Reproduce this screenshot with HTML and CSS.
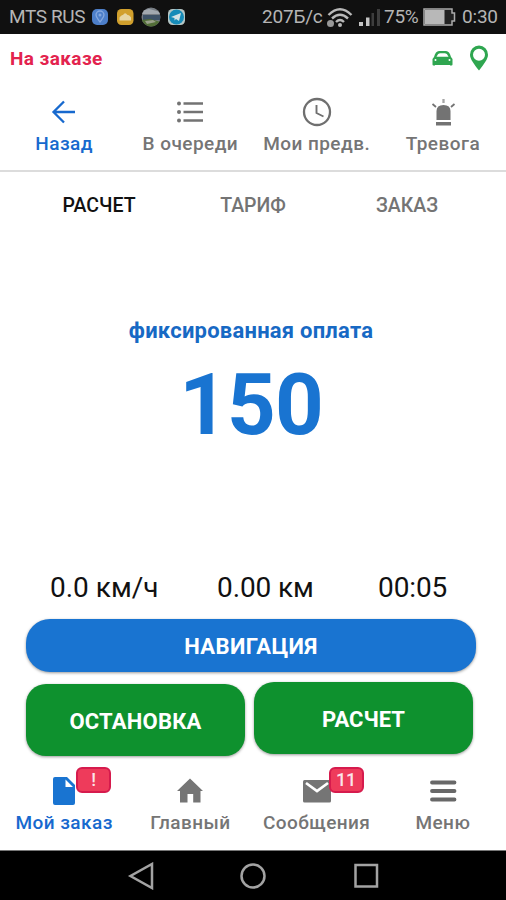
FILE: index.html
```html
<!DOCTYPE html>
<html lang="ru">
<head>
<meta charset="utf-8">
<title>Мой заказ</title>
<link rel="stylesheet" href="styles.css">
</head>
<body>
<div class="status">
  <span class="carrier">MTS RUS</span>
  <svg class="apps" width="94" height="20" viewBox="0 0 94 20">
    <rect x="1" y="2" width="16" height="16" rx="5" fill="#4d7fc9"/>
    <path d="M9 15C7 12 5 10 5 8a4 4 0 0 1 8 0c0 2-2 4-4 7z" fill="none" stroke="#86a9df" stroke-width="1.3"/><circle cx="9" cy="8" r="1.5" fill="#86a9df"/>
    <rect x="26" y="2" width="16.500" height="16" rx="4.500" fill="#d1a02d"/>
    <path d="M28.500 13.500V10.500q2-3 3.500-2.500 2-3.500 4.500 0 2-.5 3.500 2.500v3z" fill="#e7d6a3"/>
    <clipPath id="photo"><circle cx="60" cy="10" r="9.500"/></clipPath>
    <g clip-path="url(#photo)"><path fill="#777d84" d="M50 0h20v20H50z"/><path fill="#a2a9b0" d="M50 4l8-2 12 3v2H50z"/><path fill="#3e5368" d="M52 8h17v5H52z"/><path fill="#526d37" d="M50 13l9-1 11 3v5H50z"/><path fill="#9aa08b" d="M54 14l8-1 3 2-9 2z"/></g>
    <rect x="77" y="2" width="17" height="16" rx="4.500" fill="#b4c5c4"/><circle cx="85.500" cy="10" r="7.500" fill="#168bb8"/><path d="M80 10l10-4-2 8-3-2-1.500 1.500V11z" fill="#d5e3e5"/>
  </svg>
  <span class="net">207Б/с</span>
  <svg class="wifi" width="26" height="21" viewBox="0 0 26 21"><g fill="none" stroke="#b8b8b8" stroke-width="2.400"><path d="M1.500 8Q13-3.500 24.500 8M5 11.500Q13 4 21 11.500M9 15Q13 11 17 15"/></g><circle cx="13" cy="18" r="2" fill="#b8b8b8"/><circle cx="3.500" cy="16.500" r="3.500" fill="#999"/></svg>
  <svg class="signal" width="22" height="19" viewBox="0 0 22 19"><path fill="#c4c4c4" d="M0 13h4v4H0zM7 8.500h3.500V17H7z"/><path fill="#3d3d3d" d="M12.500 4H15v13h-2.500zM18 0h3v17h-3z"/></svg>
  <span class="percent">75%</span>
  <svg class="battery" width="33" height="18" viewBox="0 0 33 18"><path d="M1 1h28v4h2.500v8H29v4H1z" fill="#222" stroke="#aaa" stroke-width="1.500"/><path fill="#b8b8b8" d="M2 2h19.500v14H2z"/></svg>
  <span class="time">0:30</span>
</div>
<header class="head">
  <div class="state"><span class="state-text">На заказе</span>
    <svg class="car" width="21" height="16" viewBox="0 0 21 16"><path fill="#2fa650" fill-rule="evenodd" d="M2 7Q3.500 1 7 1h7q3.500 0 5 6l1.500 2v5.500q0 1-1 1h-1.500V15h-15v.5H1.500q-1 0-1-1V9zM4.500 6.700h12Q15 3.300 13 3.300H8Q6 3.300 4.500 6.700zM3.500 9a1 1 0 1 0 0 2 1 1 0 0 0 0-2zm14 0a1 1 0 1 0 0 2 1 1 0 0 0 0-2z"/></svg>
    <svg class="pin" width="20" height="26" viewBox="0 0 20 26"><path fill="#2fa650" fill-rule="evenodd" d="M10 .5a9 9 0 0 0-9 9.200C1 14 5 19 10 25.500 15 19 19 14 19 9.700A9 9 0 0 0 10 .5zm0 3.200a6 6 0 1 1 0 12 6 6 0 0 1 0-12z"/></svg>
  </div>
  <nav class="tools">
    <div class="item on"><svg width="30" height="30" viewBox="0 0 30 30"><path d="M26 15H5.500M15 4.500L4.500 15 15 25.500" fill="none" stroke="#1769ce" stroke-width="2.300"/></svg><span class="label">Назад</span></div>
    <div class="item"><svg width="30" height="30" viewBox="0 0 30 30"><g fill="#737373"><circle cx="4" cy="6.500" r="2"/><circle cx="4" cy="15" r="2"/><circle cx="4" cy="23.500" r="2"/><path d="M8.500 5.300H28v2.400H8.500zM8.500 13.800H28v2.400H8.500zM8.500 22.300H28v2.400H8.500z"/></g></svg><span class="label">В очереди</span></div>
    <div class="item"><svg width="30" height="30" viewBox="0 0 30 30"><g fill="none" stroke="#6f6f6f"><circle cx="15" cy="15" r="13" stroke-width="2.300"/><path d="M14.500 8v8l7 3.500" stroke-width="1.900"/></g></svg><span class="label">Мои предв.</span></div>
    <div class="item"><svg width="30" height="30" viewBox="0 0 30 30"><path fill="#737373" d="M8.500 23V14q0-6 7-6t7 6v9zM8 25h15v3.500H8z"/><path d="M4.500 7l3.500 3M26.500 7L23 10" stroke="#737373" stroke-width="1.800"/><path d="M15.500 2v4" stroke="#a6a6a6" stroke-width="2.300"/></svg><span class="label">Тревога</span></div>
  </nav>
</header>
<main class="main">
  <div class="tabs"><span class="tab active"><b>РАСЧЕТ</b></span><span class="tab"><b>ТАРИФ</b></span><span class="tab"><b>ЗАКАЗ</b></span></div>
  <div class="caption">фиксированная оплата</div>
  <div class="sum">150</div>
  <div class="stats"><span class="speed">0.0 км/ч</span><span class="distance">0.00 км</span><span class="elapsed">00:05</span></div>
  <button class="btn navigate">НАВИГАЦИЯ</button>
  <div class="actions"><button class="btn stop">ОСТАНОВКА</button><button class="btn pay">РАСЧЕТ</button></div>
</main>
<nav class="bottom">
  <div class="item on"><div class="icon"><svg width="30" height="30" viewBox="0 0 30 30"><path fill="#1974d1" fill-rule="evenodd" d="M6 1h12l8 8v18q0 2-2 2H6q-2 0-2-2V3q0-2 2-2zm10.500 2.500V11H24z"/></svg><span class="badge">!</span></div><span class="label">Мой заказ</span></div>
  <div class="item"><div class="icon"><svg width="30" height="30" viewBox="0 0 30 30"><path fill="#757575" d="M15 2.500L28 15h-2.500v11.500h-7.300V18h-5.700v8.500H5V15H2z"/></svg></div><span class="label">Главный</span></div>
  <div class="item"><div class="icon"><svg width="30" height="30" viewBox="0 0 30 30"><rect x="1" y="4" width="28" height="22.500" rx="1.500" fill="#757575"/><path d="M4 7l11 8L26 7" fill="none" stroke="#fff" stroke-width="2.700"/></svg><span class="badge">11</span></div><span class="label">Сообщения</span></div>
  <div class="item"><div class="icon"><svg width="30" height="30" viewBox="0 0 30 30"><path d="M4 6.500h22.500M4 15h22.500M4 23.500h22.500" stroke="#686868" stroke-width="3.800" stroke-linecap="round"/></svg></div><span class="label">Меню</span></div>
</nav>
<div class="system">
  <svg width="28" height="28" viewBox="0 0 28 28"><path d="M25 2v24L3.500 14z"/></svg>
  <svg width="28" height="28" viewBox="0 0 28 28"><circle cx="14" cy="14" r="11.500"/></svg>
  <svg width="28" height="28" viewBox="0 0 28 28"><rect x="3.500" y="3" width="21.500" height="21.500"/></svg>
</div>
</body>
</html>
```
FILE: styles.css
```css
* { box-sizing: border-box; }
body { margin: 0; width: 506px; height: 900px; overflow: hidden; display: flex; flex-direction: column; background: #fff; font-family: Roboto, sans-serif; color: #111; }
svg { display: block; flex: none; }
span, b, button { white-space: nowrap; }
.status { height: 34px; flex: none; background: #101010; display: flex; align-items: center; color: #b5b5b5; font-size: 19px; line-height: 34px; }
.carrier { width: 82px; margin-left: 9px; letter-spacing: -0.4px; }
.apps { width: 94px; }
.net { width: 65px; margin-left: 77px; letter-spacing: -0.2px; }
.signal { margin-left: 6px; margin-top: 2px; }
.percent { width: 37px; margin-left: 3px; letter-spacing: -0.3px; }
.battery { margin-left: 2px; }
.time { margin-left: 6px; letter-spacing: -0.2px; }
.head { height: 138px; flex: none; border-bottom: 2px solid #dcdcdc; }
.state { height: 48px; display: flex; align-items: center; padding: 0 17px 0 10px; }
.state-text { font-size: 19px; font-weight: 700; color: #e3234e; flex: 1; letter-spacing: 0.4px; }
.car { margin-right: 16px; }
.tools { display: flex; padding: 15px 0 0 1px; }
.item { flex: 1; display: flex; flex-direction: column; align-items: center; color: #757575; }
.label { font-size: 19px; line-height: 24px; letter-spacing: 0.45px; font-weight: 500; }
.tools .label { margin-top: 5px; }
.on { color: #1769ce; }
.main { height: 586px; flex: none; display: flex; flex-direction: column; }
.tabs { display: flex; height: 67px; padding: 0 22px; align-items: center; }
.tab { flex: 1; text-align: center; color: #747474; font-size: 19.500px; }
.tab b { font-weight: 500; }
.active { color: #111; }
.caption { margin-top: 78px; text-align: center; font-size: 22px; line-height: 28px; font-weight: 700; color: #1769c4; padding-right: 4px; letter-spacing: 0.22px; }
.sum { margin-top: 10px; text-align: center; font-size: 85px; line-height: 100px; font-weight: 700; color: #1974d1; letter-spacing: -1px; padding-right: 4px; }
.stats { margin-top: 116px; height: 34px; display: flex; padding-left: 50px; font-size: 28px; line-height: 34px; }
.speed { width: 167px; }
.distance { width: 161px; }
.distance, .elapsed { letter-spacing: -0.1px; }
.btn { border: 0; padding: 0; color: #fff; font-family: inherit; font-weight: 700; font-size: 22px; box-shadow: 0 1px 3px #0006; }
.navigate { margin: 14px 30px 0 26px; padding-top: 2px; height: 53px; flex: none; border-radius: 24px; background: #1974d1; letter-spacing: 0.4px; }
.actions { display: flex; gap: 9px; padding: 10px 33px 0 26px; align-items: flex-start; }
.actions .btn { width: 219px; height: 72px; padding-top: 2px; flex: none; border-radius: 20px; background: #0e912e; }
.stop { margin-top: 2px; letter-spacing: 0.2px; }
.bottom { height: 92px; flex: none; display: flex; padding: 18px 0 0 1px; }
.icon { position: relative; }
.bottom .label { margin-top: 5px; }
.badge { position: absolute; left: 27px; top: -9px; width: 35px; height: 26px; border: 2px solid #d61b4d; border-radius: 6px; background: #ee3b5b; color: #fbe5e9; font-size: 18px; line-height: 22px; text-align: center; font-weight: 500; }
.system { flex: 1; background: #000; border-top: 1px solid #777; display: flex; align-items: center; justify-content: center; gap: 84.500px; }
.system svg { fill: none; stroke: #a3a3a3; stroke-width: 2.500; }
```
